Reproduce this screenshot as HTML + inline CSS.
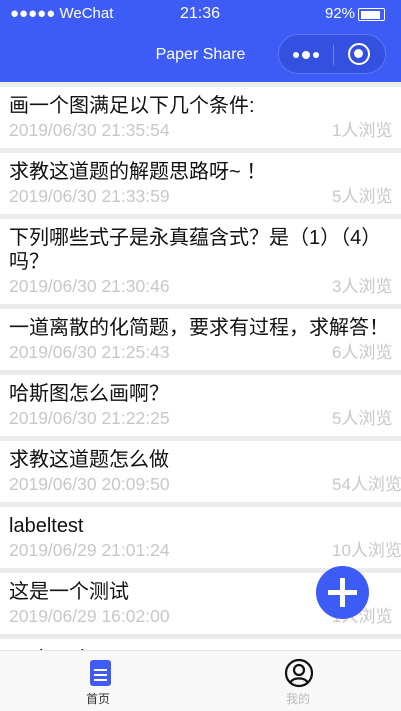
<!DOCTYPE html>
<html><head><meta charset="utf-8"><style>
*{margin:0;padding:0;box-sizing:border-box}
body{width:401px;height:711px;overflow:hidden;background:#ececec;font-family:"Liberation Sans","Noto Sans CJK SC",sans-serif;position:relative}
.hdr{position:absolute;top:0;left:0;width:401px;height:82px;background:#3d5cf5;color:#fff}
.sb{position:absolute;top:5px;font-size:15px}
.title{position:absolute;top:46px;left:0;width:401px;text-align:center;font-size:16px}
.cap{position:absolute;left:278px;top:34px;width:108px;height:40px;border-radius:20px;background:#3450e0;border:1px solid #5b74f0}
.list{position:absolute;top:87px;left:0;width:401px}
.card{background:#fff;padding:7px 0 6px 9px;margin-bottom:5px;position:relative;overflow:hidden}
.t{font-size:20px;line-height:24px;color:#111;white-space:nowrap}
.d{font-size:17.5px;line-height:24px;color:#c8c8c8;position:relative;white-space:nowrap}
.d b{font-weight:normal;position:absolute;left:323px;top:1px;font-size:17px;line-height:24px}
.tab{position:absolute;top:650px;left:0;width:401px;height:61px;background:#f8f8f8;border-top:1px solid #e4e4e4}
.fab{position:absolute;left:316px;top:566px;width:53px;height:53px;border-radius:50%;background:#3d5cf5}
</style></head><body>
<div class="hdr">
<div class="sb" style="left:10px">●●●●● WeChat</div>
<div class="sb" style="left:180px;font-size:16px">21:36</div>
<div class="sb" style="left:325px">92%</div>
<div style="position:absolute;left:358px;top:8px;width:27px;height:13px;border:1.5px solid #fff;border-radius:2px;padding:1.5px"><div style="width:90%;height:100%;background:#fff"></div></div>
<div class="title">Paper Share</div>
<div class="cap">
<div style="position:absolute;left:14px;top:16px;font-size:0">
<span style="display:inline-block;width:6px;height:6px;border-radius:50%;background:#fff;margin-right:3px"></span><span style="display:inline-block;width:8px;height:8px;border-radius:50%;background:#fff;margin-right:3px;vertical-align:-1px"></span><span style="display:inline-block;width:6px;height:6px;border-radius:50%;background:#fff"></span></div>
<div style="position:absolute;left:54px;top:10px;width:1px;height:20px;background:#6a80f0"></div>
<div style="position:absolute;left:69px;top:8px;width:22px;height:22px;border-radius:50%;border:2.5px solid #fff"><div style="position:absolute;left:4px;top:4px;width:9px;height:9px;border-radius:50%;background:#fff"></div></div>
</div>
</div>
<div class="list">
<div class="card"><div class="t">画一个图满足以下几个条件:</div><div class="d">2019/06/30 21:35:54<b>1人浏览</b></div></div>
<div class="card"><div class="t">求教这道题的解题思路呀~ ！</div><div class="d">2019/06/30 21:33:59<b>5人浏览</b></div></div>
<div class="card"><div class="t">下列哪些式子是永真蕴含式？是（1）（4）<br>吗？</div><div class="d">2019/06/30 21:30:46<b>3人浏览</b></div></div>
<div class="card"><div class="t">一道离散的化简题，要求有过程，求解答！</div><div class="d">2019/06/30 21:25:43<b>6人浏览</b></div></div>
<div class="card"><div class="t">哈斯图怎么画啊？</div><div class="d">2019/06/30 21:22:25<b>5人浏览</b></div></div>
<div class="card"><div class="t">求教这道题怎么做</div><div class="d">2019/06/30 20:09:50<b>54人浏览</b></div></div>
<div class="card"><div class="t">labeltest</div><div class="d">2019/06/29 21:01:24<b>10人浏览</b></div></div>
<div class="card"><div class="t">这是一个测试</div><div class="d">2019/06/29 16:02:00<b>1人浏览</b></div></div>
<div class="card"><div class="t">zxcbzxcb</div><div class="d">2019/06/29</div></div>
</div>
<div class="fab"><div style="position:absolute;left:12px;top:24px;width:29px;height:5px;background:#fff"></div><div style="position:absolute;left:24px;top:12px;width:5px;height:29px;background:#fff"></div></div>
<div class="tab">
<div style="position:absolute;left:90px;top:9px;width:21px;height:26px;border-radius:3px;background:#3d5cf5">
<div style="position:absolute;left:4px;top:9px;width:13px;height:2px;background:#fff"></div>
<div style="position:absolute;left:4px;top:14px;width:13px;height:2px;background:#fff"></div>
<div style="position:absolute;left:4px;top:19px;width:13px;height:2px;background:#fff"></div></div>
<div style="position:absolute;left:86px;top:39px;font-size:12px;color:#333">首页</div>
<svg style="position:absolute;left:284px;top:7px" width="30" height="30" viewBox="0 0 30 30"><circle cx="15" cy="15" r="13" fill="none" stroke="#111" stroke-width="2.2"/><circle cx="15" cy="12" r="5" fill="none" stroke="#111" stroke-width="2.2"/><path d="M6.5 24.5 C9 19 21 19 23.5 24.5" fill="none" stroke="#111" stroke-width="2.2"/></svg>
<div style="position:absolute;left:286px;top:39px;font-size:12px;color:#bbb">我的</div>
</div>
</body></html>
